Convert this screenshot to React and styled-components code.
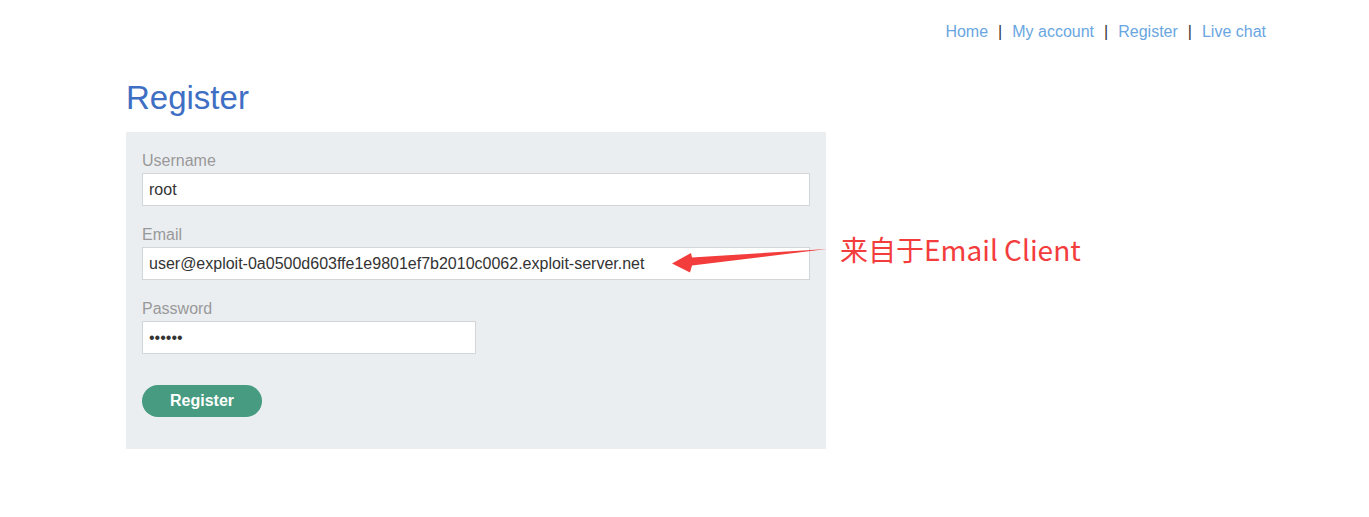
import React from 'react';
import styled, { createGlobalStyle } from 'styled-components';

const GlobalStyle = createGlobalStyle`
  html, body {
    margin: 0;
    padding: 0;
    background: #fff;
    font-family: "Liberation Sans", Arial, sans-serif;
  }
`

const Page = styled.div`
  position: relative;
  width: 1369px;
  height: 517px;
  overflow: hidden;
`

const Container = styled.div`
  width: 1140px;
  margin-left: 126px;
`

const Nav = styled.nav`
  display: flex;
  justify-content: flex-end;
  align-items: center;
  height: 63px;
  padding-top: 1px;
  box-sizing: border-box;
  font-size: 16px;
`

const NavLink = styled.a`
  color: #69a6e1;
  text-decoration: none;
`

const Sep = styled.span`
  color: #333;
  margin: 0 10px;
`

const Title = styled.h1`
  margin: 0;
  font-size: 33px;
  font-weight: normal;
  line-height: 69px;
  color: #3f6fc4;
`

const Panel = styled.form`
  width: 700px;
  box-sizing: border-box;
  background: #ebeef1;
  padding: 18px 16px 32px;
`

const Label = styled.label`
  display: block;
  height: 21px;
  line-height: 21px;
  margin-bottom: 2px;
  font-size: 16px;
  color: #999;
`

const Input = styled.input`
  display: block;
  box-sizing: border-box;
  width: ${p => (p.$half ? '334px' : '668px')};
  height: 33px;
  margin: 0 0 18px;
  padding: 0 6px;
  border: 1px solid #d3d6d9;
  background: #fff;
  font-family: "Liberation Sans", Arial, sans-serif;
  font-size: 16px;
  color: #333;
  outline: none;
`

const Button = styled.button`
  margin-top: 13px;
  width: 120px;
  height: 32px;
  border: none;
  border-radius: 16px;
  background: #469b80;
  color: #fff;
  font-family: "Liberation Sans", Arial, sans-serif;
  font-weight: bold;
  font-size: 16px;
  cursor: pointer;
`

const Note = styled.div`
  position: absolute;
  left: 840px;
  top: 229px;
  font-family: "Noto Sans CJK SC", "Noto Sans", sans-serif;
  font-size: 28px;
  line-height: 40px;
  color: #f33c3c;
  white-space: nowrap;
`

const Arrow = styled.svg`
  position: absolute;
  left: 0;
  top: 0;
  pointer-events: none;
`

const links = ['Home', 'My account', 'Register', 'Live chat'];

const App = () => {
  return (
    <Page>
      <GlobalStyle />
      <Container>
        <Nav>
          {links.map((l, i) => (
            <React.Fragment key={l}>
              {i > 0 && <Sep>|</Sep>}
              <NavLink href="#">{l}</NavLink>
            </React.Fragment>
          ))}
        </Nav>
        <Title>Register</Title>
        <Panel onSubmit={e => e.preventDefault()}>
          <Label>Username</Label>
          <Input defaultValue="root" />
          <Label>Email</Label>
          <Input defaultValue="user@exploit-0a0500d603ffe1e9801ef7b2010c0062.exploit-server.net" />
          <Label>Password</Label>
          <Input $half type="password" defaultValue="secret" />
          <Button>Register</Button>
        </Panel>
      </Container>
      <Arrow width="1369" height="517">
        <polygon
          points="672,263.5 691,253 692,257.5 827,249 692,265.5 690,272.5"
          fill="#f33c3c"
        />
      </Arrow>
      <Note>来自于Email Client</Note>
    </Page>
  );
}

export default App;
